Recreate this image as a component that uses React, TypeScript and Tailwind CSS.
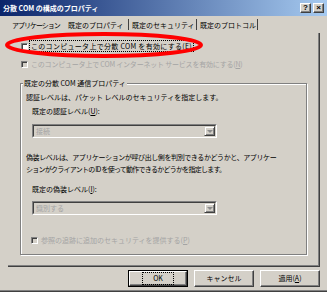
import React from "react";

function TitleBtn({ children }: { children: React.ReactNode }) {
  return (
    <div className="w-[11px] h-[10px] bg-[#d4d0c8] border border-t-white border-l-white border-r-[#404040] border-b-[#404040] shadow-[inset_-1px_-1px_0_#808080] flex items-center justify-center text-black text-[8px] leading-none font-bold font-['Liberation_Sans',sans-serif]">
      {children}
    </div>
  );
}

function Check({ disabled }: { disabled?: boolean }) {
  return (
    <div
      className={
        "w-[7px] h-[7px] shrink-0 border border-t-[#808080] border-l-[#808080] border-r-white border-b-white shadow-[inset_1px_1px_0_#404040] " +
        (disabled ? "bg-[#d4d0c8]" : "bg-white")
      }
    />
  );
}

function Combo({ text }: { text: string }) {
  return (
    <div className="ml-[12px] w-[185px] h-[14px] border border-t-[#808080] border-l-[#808080] border-r-white border-b-white">
      <div className="w-full h-full border border-t-[#404040] border-l-[#404040] border-r-[#d4d0c8] border-b-[#d4d0c8] bg-[#d4d0c8] flex items-center">
        <span className="pl-[2px] text-[#a4a4a4] leading-[10px]">{text}</span>
        <div className="ml-auto w-[11px] h-[10px] border border-t-[#d4d0c8] border-l-[#d4d0c8] border-r-[#404040] border-b-[#404040] shadow-[inset_1px_1px_0_#fff,inset_-1px_-1px_0_#808080] flex items-center justify-center">
          <div className="w-0 h-0 border-l-[3px] border-r-[3px] border-t-[3px] border-l-transparent border-r-transparent border-t-[#8a8a8a]" />
        </div>
      </div>
    </div>
  );
}

function Btn({ children, def }: { children: React.ReactNode; def?: boolean }) {
  if (def) {
    return (
      <div className="w-[60px] h-[17px] border border-black">
        <div className="w-full h-full border border-t-white border-l-white border-r-[#404040] border-b-[#404040] shadow-[inset_-1px_-1px_0_#808080] flex items-center justify-center">
          <span className="leading-[11px] px-[10px] border border-dotted border-black">{children}</span>
        </div>
      </div>
    );
  }
  return (
    <div className="w-[60px] h-[17px] border border-t-white border-l-white border-r-[#404040] border-b-[#404040] shadow-[inset_-1px_-1px_0_#808080] flex items-center justify-center">
      <span className="leading-[11px]">{children}</span>
    </div>
  );
}

function Sep() {
  return <div className="w-[1px] h-[11px] bg-[#404040] shrink-0" />;
}

export default function App() {
  return (
    <div className="relative w-[327px] h-[292px] overflow-hidden bg-[#d4d0c8] text-black font-['Noto_Sans_CJK_JP','Liberation_Sans',sans-serif] text-[7px] leading-[12px] flex flex-col">
      {/* title bar */}
      <div className="h-[16px] shrink-0 flex items-center pl-[3px] pr-[3px] bg-[linear-gradient(to_right,#0a246a,#a6caf0)]">
        <span className="text-white font-bold whitespace-nowrap">分散 COM の構成のプロパティ</span>
        <div className="ml-auto flex gap-[2px]">
          <TitleBtn>?</TitleBtn>
          <TitleBtn>×</TitleBtn>
        </div>
      </div>

      {/* tabs */}
      <div className="h-[17px] shrink-0 flex items-center pl-[12px] whitespace-nowrap">
        <span className="w-[56px] tracking-[-1px]">アプリケーション</span>
        <span className="w-[60px]">既定のプロパティ</span>
        <Sep />
        <span className="ml-[3px] w-[64px]">既定のセキュリティ</span>
        <Sep />
        <span className="ml-[3px] w-[57px]">既定のプロトコル</span>
        <Sep />
      </div>

      {/* tab panel */}
      <div className="ml-[8px] w-[312px] h-[234px] shrink-0 border-r border-b border-r-[#404040] border-b-[#404040] shadow-[inset_-1px_-1px_0_#808080] flex flex-col whitespace-nowrap">
        <div className="mt-[7px] ml-[13px] h-[12px] flex items-center">
          <Check />
          <span className="ml-[1px] px-[1px] border border-dotted border-black leading-[10px] tracking-[0.3px]">
            このコンピュータ上で分散 COM を有効にする(<span className="underline">E</span>)
          </span>
        </div>
        <div className="mt-[6px] ml-[13px] h-[12px] flex items-center">
          <Check disabled />
          <span className="ml-[3px] text-[#a4a4a4] tracking-[-0.2px]">
            このコンピュータ上で COM インターネット サービスを有効にする(<span className="underline">N</span>)
          </span>
        </div>

        {/* group box */}
        <div className="mt-[13px] ml-[12px] w-[287px] h-[172px] shrink-0 border border-[#808080] shadow-[inset_1px_1px_0_#fff,1px_1px_0_#fff] flex flex-col">
          <div className="ml-[2px] -mt-[7px] w-fit px-[1px] bg-[#d4d0c8]">既定の分散 COM 通信プロパティ</div>
          <div className="mt-[2px] pl-[5px]">認証レベルは、パケット レベルのセキュリティを指定します。</div>
          <div className="mt-[2px] pl-[11px]">
            既定の認証レベル(<span className="underline">U</span>):
          </div>
          <div className="mt-[7px] ml-[-1px]">
            <Combo text="接続" />
          </div>
          <div className="mt-[13px] pl-[5px]">
            <div className="tracking-[-0.4px]">偽装レベルは、アプリケーションが呼び出し側を判別できるかどうかと、アプリケー</div>
            <div className="tracking-[-0.75px]">ションがクライアントの ID を使って動作できるかどうかを指定します。</div>
          </div>
          <div className="mt-[8px] pl-[11px]">
            既定の偽装レベル(<span className="underline">I</span>):
          </div>
          <div className="mt-[6px] ml-[-1px]">
            <Combo text="識別する" />
          </div>
          <div className="mt-[19px] ml-[10px] h-[12px] flex items-center">
            <Check disabled />
            <span className="ml-[3px] text-[#a4a4a4]">
              参照の追跡に追加のセキュリティを提供する(<span className="underline">P</span>)
            </span>
          </div>
        </div>
      </div>

      {/* buttons */}
      <div className="mt-[3px] h-[17px] shrink-0 flex justify-end gap-[6px] pr-[7px]">
        <Btn def>OK</Btn>
        <Btn>キャンセル</Btn>
        <Btn>
          適用(<span className="underline">A</span>)
        </Btn>
      </div>

      <div className="mt-[3px] h-[1px] bg-[#808080] shrink-0" />
      <div className="h-[1px] bg-[#404040] shrink-0" />

      {/* red ellipse highlight */}
      <svg className="absolute left-0 top-0 pointer-events-none" width="327" height="292">
        <ellipse cx="104" cy="45" rx="97" ry="11" fill="none" stroke="#f00" strokeWidth="4" />
      </svg>
    </div>
  );
}
